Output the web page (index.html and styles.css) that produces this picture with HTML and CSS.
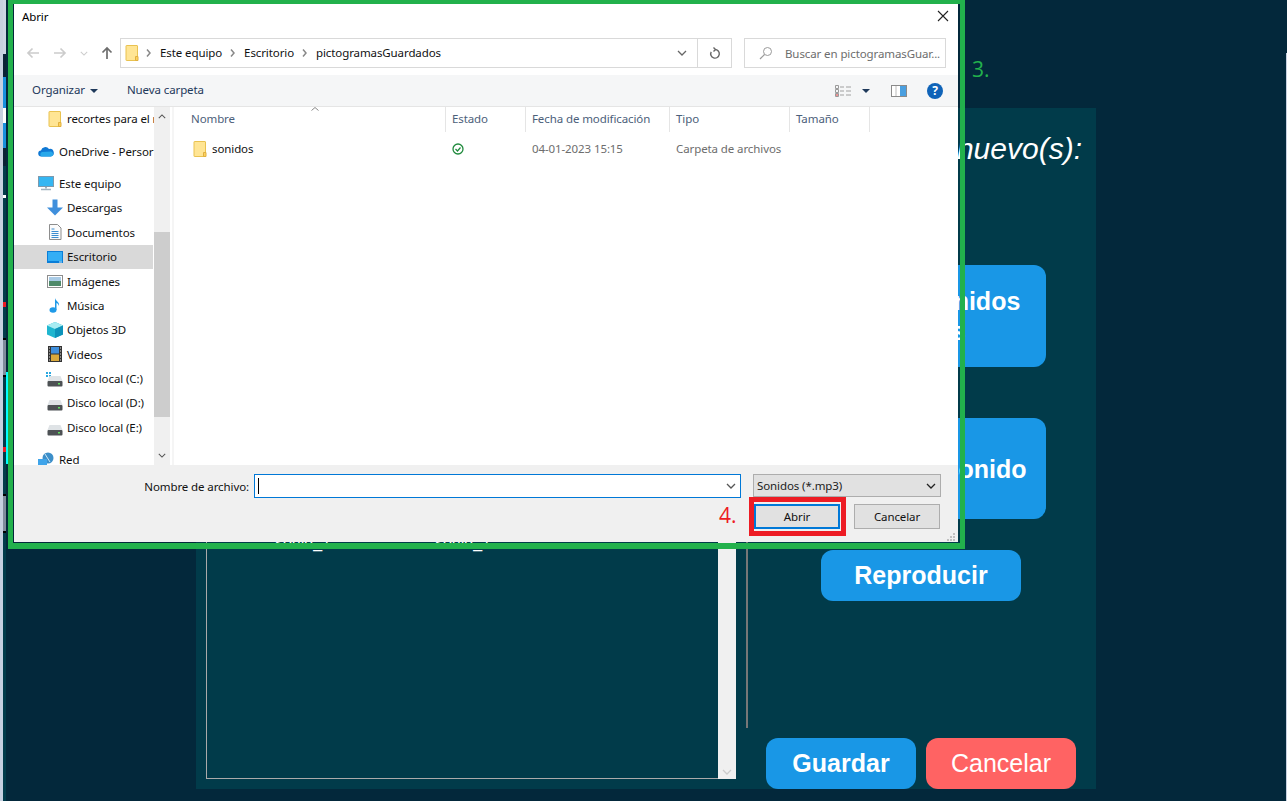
FILE: index.html
```html
<!DOCTYPE html>
<html lang="es">
<head>
    <meta charset="UTF-8">
    <meta name="viewport" content="width=device-width, initial-scale=1.0">
    <title>Abrir</title>
    <link rel="stylesheet" href="styles.css">
</head>
<body>
    <!-- icons used more than once -->
    <svg class="sprite" width="0" height="0">
        <symbol id="folder" viewBox="0 0 14 18">
            <path d="M1.5 1.5h10.5a.5.5 0 0 1 .5.5v14.500h-11a.5.5 0 0 1-.5-.5v-14a.5.5 0 0 1 .5-.5z" fill="#ffe594" stroke="#e9c250"/>
            <path d="M10.500 12.500h2.500v4h-2.500z" fill="#ffd25c" stroke="#e0b040"/>
        </symbol>
        <symbol id="disk" viewBox="0 0 16 12">
            <path d="M2.500 1h11l2 5h-15z" fill="#dfe3e6"/>
            <rect x=".5" y="6" width="15" height="5.500" rx="1" fill="#4d5154"/>
            <rect x="11" y="8" width="2" height="1.500" fill="#5fe05f"/>
        </symbol>
        <symbol id="chev-down" viewBox="0 0 10 6">
            <path d="M1 1l4 4 4-4" fill="none" stroke="currentColor" stroke-width="1.300"/>
        </symbol>
        <symbol id="chev-right" viewBox="0 0 5 8">
            <path d="M1 .5l3 3.500-3 3.500" fill="none" stroke="currentColor" stroke-width="1.500"/>
        </symbol>
    </svg>

    <!-- the page behind the dialog -->
    <main class="panel">
        <section class="list-col">
            <div class="sound-list">
                <div class="sound-grid">
                    <div class="sound-item"><div class="sound-thumb"></div><span>sonid_1</span></div>
                    <div class="sound-item"><div class="sound-thumb"></div><span>sonid_1</span></div>
                </div>
            </div>
            <div class="list-scroll">
                <svg class="list-scroll-arrow"><use href="#chev-down"/></svg>
            </div>
        </section>

        <section class="side-col">
            <div class="side-top">
                <h2 class="side-title">Sonido(s) nuevo(s):</h2>
                <button class="btn btn-big btn-first">Agregar sonidos<br>previos</button>
                <button class="btn btn-big btn-second">Descargar sonido</button>
                <button class="btn btn-play">Reproducir</button>
            </div>
            <div class="side-actions">
                <button class="btn btn-action">Guardar</button>
                <button class="btn btn-action btn-cancel">Cancelar</button>
            </div>
        </section>
    </main>

    <!-- bits of other windows at the left edge -->
    <div class="edge">
        <div class="edge-light"></div>
        <div class="edge-mid">
            <i class="seg-light"></i><i class="seg-dark"></i><i class="seg-blue"></i><i class="seg-white"></i><i class="seg-blue2"></i><i class="seg-dark2"></i>
            <i class="seg-teal1"></i><i class="seg-dot"></i><i class="seg-teal2"></i><i class="seg-red"></i><i class="seg-teal3"></i><i class="seg-black"></i><i class="seg-grey"></i><i class="seg-black"></i>
            <i class="seg-teal4"></i><i class="seg-red"></i><i class="seg-teal5"></i><i class="seg-black"></i><i class="seg-grey2"></i><i class="seg-black"></i>
        </div>
        <div class="edge-thin">
            <i class="thin-dark"></i><i class="thin-cyan"></i><i class="thin-low"></i>
        </div>
    </div>
    <div class="edge-right"></div>

    <!-- file dialog -->
    <div class="frame">
        <div class="dialog">
            <div class="titlebar">
                <span>Abrir</span>
                <svg class="close" width="12" height="12" viewBox="0 0 12 12"><path d="M1 1l10 10M11 1L1 11" stroke="#222" stroke-width="1.100"/></svg>
            </div>

            <div class="navbar">
                <div class="nav-btns">
                    <svg width="14" height="12" viewBox="0 0 14 12"><path d="M13 6H2M6.500 1.500L2 6l4.500 4.500" fill="none" stroke="#ccc" stroke-width="1.700"/></svg>
                    <svg width="14" height="12" viewBox="0 0 14 12"><path d="M1 6h11M7.500 1.500L12 6l-4.500 4.500" fill="none" stroke="#ccc" stroke-width="1.700"/></svg>
                    <svg class="nav-small" width="8" height="5"><use href="#chev-down"/></svg>
                    <svg width="12" height="14" viewBox="0 0 12 14"><path d="M6 13V2M1.500 6.500L6 2l4.500 4.500" fill="none" stroke="#6d6d6d" stroke-width="1.700"/></svg>
                </div>
                <div class="address">
                    <svg class="addr-folder" width="14" height="18"><use href="#folder"/></svg>
                    <svg class="crumb-sep" width="5" height="8"><use href="#chev-right"/></svg>
                    <span>Este equipo</span>
                    <svg class="crumb-sep" width="5" height="8"><use href="#chev-right"/></svg>
                    <span>Escritorio</span>
                    <svg class="crumb-sep" width="5" height="8"><use href="#chev-right"/></svg>
                    <span>pictogramasGuardados</span>
                    <svg class="addr-drop" width="10" height="6"><use href="#chev-down"/></svg>
                    <div class="addr-refresh">
                        <svg width="12" height="13" viewBox="0 0 12 13"><path d="M6 2.500a4.300 4.300 0 1 1-3.800 2.300M4.500 .5L6.500 2.500 4.500 4.500" fill="none" stroke="#666" stroke-width="1.400"/></svg>
                    </div>
                </div>
                <div class="search">
                    <svg width="14" height="14" viewBox="0 0 14 14"><circle cx="8.500" cy="5.500" r="4" fill="none" stroke="#9a9a9a"/><path d="M5.500 8.500L1 13" stroke="#9a9a9a" stroke-width="1.200"/></svg>
                    <span>Buscar en pictogramasGuar...</span>
                </div>
            </div>

            <div class="toolbar">
                <span class="tool-item">Organizar</span>
                <i class="caret"></i>
                <span class="tool-item tool-new">Nueva carpeta</span>
                <div class="tool-right">
                    <svg width="16" height="12" viewBox="0 0 16 12"><path d="M.5.5h3v3h-3zM.5 4.500h3v3h-3zM.5 8.500h3v3h-3z" fill="none" stroke="#9a9a9a"/><path d="M1 10h2" stroke="#d33"/><path d="M5 2h4M11 2h5M5 6h4M11 6h5M5 10h4M11 10h5" stroke="#a0a0a0"/></svg>
                    <i class="caret caret-views"></i>
                    <svg class="tool-pane" width="16" height="12" viewBox="0 0 16 12"><rect x=".5" y=".5" width="15" height="11" fill="#fff" stroke="#8a8a8a"/><rect x="9" y="1" width="6" height="10" fill="#4a9fe0"/><path d="M5 1v10" stroke="#bbb"/></svg>
                    <span class="help">?</span>
                </div>
            </div>

            <div class="body">
                <nav class="tree">
                    <ul class="tree-list">
                        <li class="tree-row sub"><svg width="14" height="18"><use href="#folder"/></svg><span>recortes para el r</span></li>
                        <li class="tree-row top gap">
                            <svg width="16" height="11" viewBox="0 0 16 11"><path d="M3.500 10.500a3 3 0 0 1-.5-6A4.500 4.500 0 0 1 11 3a3.800 3.800 0 0 1 1.800 7.500z" fill="#0f78d4"/><path d="M3.500 10.500a2.500 2.500 0 0 1 .5-4.500l9-.5c3 1 3 5-.5 5z" fill="#28a8ea"/></svg>
                            <span>OneDrive - Persor</span>
                        </li>
                        <li class="tree-row top gap">
                            <svg width="16" height="15" viewBox="0 0 16 15"><rect x=".5" y=".5" width="15" height="10" fill="#35b6f2" stroke="#7d99ad"/><path d="M7 11h2v1.500H7z" fill="#9fb2bf"/><path d="M3 13.500h10" stroke="#9fb2bf" stroke-width="1.500"/></svg>
                            <span>Este equipo</span>
                        </li>
                        <li class="tree-row sub">
                            <svg width="16" height="17" viewBox="0 0 16 17"><path d="M5.500 .5h5v8H16L8 16.500 0 8.500h5.500z" fill="#3f8fdc"/></svg>
                            <span>Descargas</span>
                        </li>
                        <li class="tree-row sub">
                            <svg width="14" height="16" viewBox="0 0 14 16"><path d="M1.500.5h8l3.500 3.500v11.500H1.500z" fill="#fbfbfb" stroke="#8d8d8d"/><path d="M3.500 5h3M3.500 7.500h7M3.500 9.500h7M3.500 11.500h7M3.500 13.500h7" stroke="#3d8ed0"/></svg>
                            <span>Documentos</span>
                        </li>
                        <li class="tree-row sub active">
                            <svg width="16" height="12" viewBox="0 0 16 12"><rect width="16" height="12" fill="#0a7ed8"/><rect x="1" y="1" width="14" height="9" fill="#33aef5"/><path d="M12 11h3" stroke="#bfe4fb"/></svg>
                            <span>Escritorio</span>
                        </li>
                        <li class="tree-row sub">
                            <svg width="16" height="13" viewBox="0 0 16 13"><rect x=".5" y=".5" width="15" height="12" fill="#fff" stroke="#8d8d8d"/><rect x="2" y="2" width="12" height="4" fill="#a9cbe6"/><rect x="2" y="6" width="12" height="5" fill="#4f8a6a"/></svg>
                            <span>Imágenes</span>
                        </li>
                        <li class="tree-row sub">
                            <svg width="12" height="16" viewBox="0 0 12 16"><ellipse cx="4" cy="13" rx="3.500" ry="2.800" fill="#1f9ae8"/><path d="M6 13V1c.5 3 5 4 4 8-.5-2-2-3-2.500-3V13z" fill="#1f9ae8"/></svg>
                            <span>Música</span>
                        </li>
                        <li class="tree-row sub">
                            <svg width="16" height="16" viewBox="0 0 16 16"><path d="M8 0l8 3.500v9L8 16 0 12.500v-9z" fill="#1fb6cf"/><path d="M8 0l8 3.500L8 7 0 3.500z" fill="#a8ecf2"/><path d="M8 7l8-3.500v9L8 16z" fill="#0d93ba"/></svg>
                            <span>Objetos 3D</span>
                        </li>
                        <li class="tree-row sub">
                            <svg width="14" height="16" viewBox="0 0 14 16"><rect width="14" height="16" fill="#333"/><rect x="3" y="1" width="8" height="6.500" fill="#3f8fdc"/><rect x="3" y="8.500" width="8" height="6.500" fill="#d9a93c"/><path d="M1 2h1M1 5h1M1 8h1M1 11h1M1 14h1M12 2h1M12 5h1M12 8h1M12 11h1M12 14h1" stroke="#ddd"/></svg>
                            <span>Videos</span>
                        </li>
                        <li class="tree-row sub">
                            <div class="disk-win"><i></i><i></i><i></i><i></i></div>
                            <svg width="16" height="12" class="disk"><use href="#disk"/></svg>
                            <span>Disco local (C:)</span>
                        </li>
                        <li class="tree-row sub"><svg class="disk" width="16" height="12"><use href="#disk"/></svg><span>Disco local (D:)</span></li>
                        <li class="tree-row sub"><svg class="disk" width="16" height="12"><use href="#disk"/></svg><span>Disco local (E:)</span></li>
                        <li class="tree-row top gap">
                            <svg width="16" height="16" viewBox="0 0 16 16"><circle cx="10" cy="6" r="5.500" fill="#3d8fc9"/><path d="M7 2l5 8" stroke="#cfe8f7"/><rect y="7" width="9" height="8" fill="#3fa4ea"/></svg>
                            <span>Red</span>
                        </li>
                    </ul>
                    <div class="tree-scroll">
                        <svg class="tree-arrow" width="8" height="5"><use href="#chev-down"/></svg>
                        <div class="tree-thumb"></div>
                        <svg class="tree-arrow" width="8" height="5"><use href="#chev-down"/></svg>
                    </div>
                </nav>

                <section class="files">
                    <svg class="sort-caret" width="8" height="4" viewBox="0 0 8 4"><path d="M.5 3.500L4 .5l3.500 3" fill="none" stroke="#888"/></svg>
                    <div class="file-cols file-head">
                        <span>Nombre</span><span>Estado</span><span>Fecha de modificación</span><span>Tipo</span><span>Tamaño</span>
                    </div>
                    <div class="file-cols file-row">
                        <span class="file-name"><svg width="14" height="18"><use href="#folder"/></svg>sonidos</span>
                        <span class="file-state">
                            <svg width="12" height="12" viewBox="0 0 12 12"><circle cx="6" cy="6" r="5" fill="none" stroke="#1f8a3c" stroke-width="1.300"/><path d="M3.500 6l2 2 3-3.500" fill="none" stroke="#1f8a3c" stroke-width="1.200"/></svg>
                        </span>
                        <span>04-01-2023 15:15</span>
                        <span>Carpeta de archivos</span>
                        <span></span>
                    </div>
                </section>
            </div>

            <footer class="footer">
                <div class="footer-row">
                    <label class="file-label">Nombre de archivo:</label>
                    <div class="file-input">
                        <i class="text-caret"></i>
                        <svg width="10" height="6"><use href="#chev-down"/></svg>
                    </div>
                    <div class="file-type">
                        <span>Sonidos (*.mp3)</span>
                        <svg width="10" height="6"><use href="#chev-down"/></svg>
                    </div>
                </div>
                <div class="footer-btns">
                    <button class="win-btn win-default">Abrir</button>
                    <button class="win-btn">Cancelar</button>
                </div>
                <svg class="grip" width="10" height="10" viewBox="0 0 10 10"><path d="M7 1h2v2H7zM4 4h2v2H4zM7 4h2v2H7zM1 7h2v2H1zM4 7h2v2H4zM7 7h2v2H7z" fill="#c0c0c0"/></svg>
            </footer>
        </div>
    </div>

    <!-- step marks drawn over the capture -->
    <span class="step step-3">3.</span>
    <span class="step step-4">4.</span>
    <div class="mark-abrir"></div>
</body>
</html>
```

FILE: styles.css
```css
* {
    box-sizing: border-box;
}

html, body {
    margin: 0;
    height: 801px;
    overflow: hidden;
}

body {
    background-color: #03283b;
    font-family: "Liberation Sans", Arial, sans-serif;
    color: white;
    padding: 108px 191px 12px 196px;
}

.sprite {
    display: block;
    height: 0;
}

/* page behind the dialog */
.panel {
    display: flex;
    width: 900px;
    height: 681px;
    background-color: #013b4a;
    padding-left: 10px;
}

.list-col {
    display: flex;
    width: 530px;
    height: 570px;
    margin-top: 101px;
}

.sound-list {
    flex: 1;
    border-left: 1px solid #aaa;
    border-bottom: 1px solid #aaa;
    padding: 20px 0 0 16px;
}

.sound-grid {
    display: grid;
    grid-template-columns: 160px 160px;
}

.sound-item {
    text-align: center;
    font-size: 16px;
    line-height: 20px;
}

.sound-thumb {
    height: 304px;
}

.list-scroll {
    position: relative;
    width: 18px;
    background-color: #f0f0f0;
    display: flex;
    flex-direction: column;
    justify-content: flex-end;
    align-items: center;
    padding-bottom: 4px;
    color: #ccc;
}

.list-scroll-arrow {
    width: 10px;
    height: 6px;
}

.side-col {
    width: 350px;
    margin-left: 10px;
    display: flex;
    flex-direction: column;
}

.side-top {
    height: 620px;
    border-left: 2px solid #777;
    padding-right: 2px;
    display: flex;
    flex-direction: column;
    align-items: center;
}

.side-title {
    align-self: flex-end;
    white-space: nowrap;
    margin: 23px 12px 0 0;
    font-size: 30px;
    line-height: 36px;
    font-weight: normal;
    font-style: italic;
}

.btn {
    border: none;
    border-radius: 12px;
    background-color: #1997e6;
    color: white;
    font-family: inherit;
    font-size: 25px;
    font-weight: bold;
    line-height: 30px;
    padding: 0 0 2px;
}

.btn-big {
    width: 250px;
    padding: 0;
}

.btn-first {
    height: 102px;
    margin-top: 98px;
}

.btn-second {
    height: 101px;
    margin-top: 51px;
}

.btn-play {
    width: 200px;
    height: 51px;
    margin-top: 31px;
}

.side-actions {
    display: flex;
    justify-content: center;
    gap: 10px;
    margin-top: 10px;
}

.btn-action {
    width: 150px;
    height: 51px;
}

.btn-cancel {
    background-color: #ff6363;
    font-weight: normal;
}

/* strips of other windows */
.edge {
    position: absolute;
    left: 0;
    top: 0;
    width: 8px;
    height: 801px;
    display: flex;
}

.edge i {
    display: block;
}

.edge-light {
    width: 3px;
    background-color: #c6d0e0;
}

.edge-mid {
    width: 3px;
    background-color: #013b4a;
}

.edge-thin {
    width: 2px;
}

.seg-light { height: 54px; background-color: #ccd5e4; }
.seg-dark { height: 23px; background-color: #0a2235; }
.seg-blue { height: 31px; background-color: #1890dc; }
.seg-white { height: 15px; background-color: #fff; }
.seg-blue2 { height: 25px; background-color: #1890dc; }
.seg-dark2 { height: 18px; background-color: #0a2235; }
.seg-teal1 { height: 29px; }
.seg-dot { height: 3px; background-color: #fff; }
.seg-teal2 { height: 104px; }
.seg-red { height: 5px; background-color: #ed1c24; }
.seg-teal3 { height: 31px; }
.seg-black { height: 2px; background-color: #000; }
.seg-grey { height: 35px; background-color: #7f8c9c; }
.seg-teal4 { height: 70px; }
.seg-teal5 { height: 42px; }
.seg-grey2 { height: 35px; background-color: #7f8c9c; }

.thin-dark { height: 372px; background-color: #03283b; }
.thin-cyan { height: 92px; background-color: #00ffff; }
.thin-low { height: 337px; background-color: #03283b; }

.edge-right {
    position: absolute;
    left: 1286px;
    top: 53px;
    width: 1px;
    height: 748px;
    background-color: #c6d0e0;
}

/* dialog and its green mark */
.frame {
    position: absolute;
    left: 8px;
    top: 0;
    width: 957px;
    height: 549px;
    border: solid #22b14c;
    border-width: 4px 5px 6px 5px;
    padding: 0 2px 1px 1px;
}

.dialog {
    height: 100%;
    background-color: white;
    color: black;
    font-family: "Noto Sans", "Liberation Sans", sans-serif;
    font-size: 11.5px;
    letter-spacing: -0.1px;
    display: flex;
    flex-direction: column;
}

.titlebar {
    flex: 0 0 34px;
    display: flex;
    justify-content: space-between;
    align-items: flex-start;
    padding: 5px 9px 0 8px;
    line-height: 16px;
}

.close {
    margin-top: 1px;
}

.navbar {
    flex: 0 0 30px;
    display: flex;
    align-items: stretch;
}

.nav-btns {
    width: 106px;
    display: flex;
    align-items: center;
    padding: 0 7px 0 12px;
    justify-content: space-between;
}

.nav-small {
    color: #ccc;
}

.address {
    width: 612px;
    border: 1px solid #d9d9d9;
    display: flex;
    align-items: center;
    padding-left: 4px;
    color: #111;
}

.addr-folder {
    margin-right: 7px;
}

.crumb-sep {
    color: #888;
    margin-right: 9px;
}

.address span {
    margin-right: 8px;
    padding-bottom: 2px;
}

.addr-drop {
    margin-left: auto;
    margin-right: 10px;
    color: #666;
}

.addr-refresh {
    width: 34px;
    height: 100%;
    border-left: 1px solid #d9d9d9;
    display: flex;
    align-items: center;
    justify-content: center;
}

.search {
    width: 202px;
    margin-left: 12px;
    border: 1px solid #d9d9d9;
    display: flex;
    align-items: center;
    padding-left: 14px;
    gap: 12px;
    color: #6d6d6d;
    white-space: nowrap;
}

.search svg {
    flex: none;
}

.toolbar {
    flex: 0 0 32px;
    margin-top: 7px;
    background-color: #f5f6f7;
    border-bottom: 1px solid #e5e5e5;
    display: flex;
    align-items: center;
    padding: 0 15px 0 18px;
    color: #1e395b;
}

.tool-item {
    padding-bottom: 2px;
}

.caret {
    width: 0;
    height: 0;
    border-left: 4px solid transparent;
    border-right: 4px solid transparent;
    border-top: 4px solid #1e395b;
    margin-left: 5px;
}

.tool-new {
    margin-left: 29px;
}

.tool-right {
    margin-left: auto;
    display: flex;
    align-items: center;
}

.caret-views {
    margin-left: 11px;
}

.tool-pane {
    margin-left: 21px;
}

.help {
    width: 16px;
    height: 16px;
    margin-left: 20px;
    border-radius: 50%;
    background-color: #0f63b8;
    color: white;
    font-weight: bold;
    font-size: 12px;
    line-height: 16px;
    text-align: center;
}

.body {
    flex: 1;
    display: flex;
    min-height: 0;
}

.tree {
    width: 158px;
    display: flex;
    overflow: hidden;
}

.tree-list {
    list-style: none;
    margin: 0;
    padding: 0;
    width: 140px;
    flex: none;
}

.tree-row {
    height: 24.4px;
    display: flex;
    align-items: center;
    white-space: nowrap;
    overflow: hidden;
    color: #111;
    padding-bottom: 1px;
}

.tree-row.sub {
    padding-left: 33px;
}

.tree-row.top {
    padding-left: 24px;
}

.tree-row.gap {
    margin-top: 8px;
}

.tree-row svg {
    flex: none;
    width: 16px;
    margin-right: 4px;
}

.tree-row.top svg {
    margin-right: 5px;
}

.tree-row.active {
    background-color: #d9d9d9;
    margin-right: 1px;
}

.disk-win {
    flex: none;
    width: 6px;
    height: 6px;
    display: grid;
    grid-template-columns: 3px 3px;
    margin: -8px -5px 0 -1px;
}

.disk-win i {
    background-color: #2aa8e0;
    margin: 0 1px 1px 0;
}

.tree-row svg.disk {
    height: 12px;
    margin-top: 5px;
}

.tree-scroll {
    width: 16px;
    flex: none;
    background-color: #f0f0f0;
    color: #555;
    display: flex;
    flex-direction: column;
    align-items: center;
}

.tree-arrow {
    flex: none;
    margin: 7px 0;
}

.tree-arrow:first-child {
    transform: rotate(180deg);
}

.tree-thumb {
    width: 100%;
    height: 188px;
    margin: 106px 0 29px;
    background-color: #cdcdcd;
}

.files {
    flex: 1;
    position: relative;
    border-left: 2px solid #f5f5f5;
    color: #6d6d6d;
}

.sort-caret {
    position: absolute;
    left: 137px;
    top: 0;
}

.file-cols {
    display: grid;
    grid-template-columns: 272px 80px 144px 120px 80px;
}

.file-cols span {
    padding-left: 6px;
    white-space: nowrap;
}

.file-cols span:first-child {
    padding-left: 17px;
}

.file-head {
    height: 25px;
    line-height: 24px;
    color: #4c607a;
}

.file-head span {
    border-right: 1px solid #e5e5e5;
}

.file-row {
    height: 24px;
    margin-top: 5px;
    line-height: 24px;
}

.file-row span.file-name {
    display: flex;
    align-items: center;
    gap: 5px;
    padding-left: 19px;
    color: #111;
}

.file-state {
    display: flex;
    align-items: center;
}

.footer {
    flex: 0 0 77px;
    position: relative;
    background-color: #f0f0f0;
    padding-top: 9px;
}

.footer-row {
    display: flex;
    align-items: flex-start;
}

.file-label {
    width: 235px;
    text-align: right;
    line-height: 25px;
    color: #111;
}

.file-input {
    width: 487px;
    height: 24px;
    margin-left: 5px;
    background-color: white;
    border: 1px solid #0078d7;
    display: flex;
    align-items: center;
    justify-content: space-between;
    padding: 0 4px 0 3px;
    color: #555;
}

.text-caret {
    width: 1px;
    height: 16px;
    background-color: black;
}

.file-type {
    width: 188px;
    height: 23px;
    margin-left: 12px;
    background-color: #e1e1e1;
    border: 1px solid #adadad;
    display: flex;
    align-items: center;
    justify-content: space-between;
    padding: 0 4px 0 3px;
    color: #222;
}

.footer-btns {
    display: flex;
    justify-content: flex-end;
    gap: 14px;
    padding-right: 18px;
    margin-top: 5px;
}

.win-btn {
    width: 86px;
    height: 25px;
    background-color: #e1e1e1;
    border: 1px solid #adadad;
    font-family: inherit;
    font-size: inherit;
    letter-spacing: inherit;
    color: #111;
    padding: 0 0 1px;
}

.win-default {
    border: 2px solid #0078d7;
}

.grip {
    position: absolute;
    right: 2px;
    bottom: 0;
}

/* step marks */
.step {
    position: absolute;
    font-family: "Open Sans", sans-serif;
    font-size: 21px;
    line-height: 24px;
}

.step-3 {
    left: 972px;
    top: 57px;
    color: #22b14c;
}

.step-4 {
    left: 719px;
    top: 503px;
    color: #ed1c24;
}

.mark-abrir {
    position: absolute;
    left: 749px;
    top: 497px;
    width: 97px;
    height: 39px;
    border: 5px solid #ed1c24;
}
```
